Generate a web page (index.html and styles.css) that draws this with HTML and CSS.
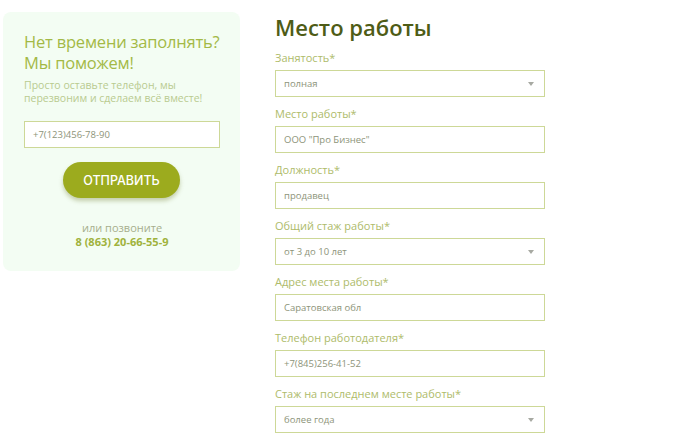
FILE: index.html
```html
<!DOCTYPE html>
<html lang="ru">
<head>
<meta charset="utf-8">
<link rel="stylesheet" href="styles.css">
</head>
<body>
<div class="page">
  <aside class="help">
    <h2 class="help-title">Нет времени заполнять?<br>Мы поможем!</h2>
    <p class="help-text">Просто оставьте телефон, мы перезвоним и сделаем всё вместе!</p>
    <div class="field help-field">+7(123)456-78-90</div>
    <button class="send">ОТПРАВИТЬ</button>
    <div class="call">или позвоните</div>
    <div class="phone">8 (863) 20-66-55-9</div>
  </aside>
  <main class="form">
    <h1 class="form-title">Место работы</h1>
    <div class="group">
      <div class="label">Занятость*</div>
      <div class="field select">полная<span class="arrow"></span></div>
    </div>
    <div class="group">
      <div class="label">Место работы*</div>
      <div class="field">ООО "Про Бизнес"</div>
    </div>
    <div class="group">
      <div class="label">Должность*</div>
      <div class="field">продавец</div>
    </div>
    <div class="group">
      <div class="label">Общий стаж работы*</div>
      <div class="field select">от 3 до 10 лет<span class="arrow"></span></div>
    </div>
    <div class="group">
      <div class="label">Адрес места работы*</div>
      <div class="field">Саратовская обл</div>
    </div>
    <div class="group">
      <div class="label">Телефон работодателя*</div>
      <div class="field">+7(845)256-41-52</div>
    </div>
    <div class="group">
      <div class="label">Стаж на последнем месте работы*</div>
      <div class="field select">более года<span class="arrow"></span></div>
    </div>
  </main>
</div>
</body>
</html>
```
FILE: styles.css
```css
* { box-sizing: border-box; }
html, body { margin: 0; padding: 0; background: #fff; }
body { font-family: "Open Sans", "Noto Sans", sans-serif; width: 700px; height: 441px; overflow: hidden; }
.page { display: flex; align-items: flex-start; padding-left: 3px; gap: 35px; }

.help {
  margin-top: 12px;
  width: 237px;
  height: 259px;
  background: #f3fdf3;
  border-radius: 8px;
  padding: 19px 20px 0 21px;
  display: flex;
  flex-direction: column;
}
.help-title {
  margin: 0;
  font-size: 16.5px;
  letter-spacing: -0.2px;
  line-height: 21px;
  font-weight: 400;
  color: #a3b946;
  white-space: nowrap;
}
.help-text {
  margin: 6px 0 0;
  font-size: 10.5px;
  line-height: 13px;
  color: #b9cb90;
}
.field {
  height: 27px;
  border: 1px solid #cdd897;
  background: #fff;
  font-size: 9.5px;
  line-height: 25px;
  padding: 0 8px;
  color: #8d9479;
  position: relative;
}
.help-field { margin-top: 16px; width: 196px; }
.send {
  align-self: center;
  margin-top: 14px;
  width: 117px;
  height: 36px;
  border: none;
  border-radius: 18px;
  background: #9cab1e;
  color: #fff;
  font-family: "Inter", "Open Sans", sans-serif;
  font-size: 12.5px;
  font-weight: 500;
  box-shadow: 0 3px 4px rgba(110, 120, 40, 0.35);
  margin-left: -1px;
}
.call {
  margin-top: 23px;
  text-align: center;
  font-size: 11px;
  line-height: 14px;
  color: #a6ae8c;
}
.phone {
  text-align: center;
  font-size: 11px;
  line-height: 14px;
  font-weight: 700;
  color: #a0b23c;
}

.form { width: 270px; padding-top: 9px; }
.form-title {
  margin: 0 0 5px;
  font-size: 22px;
  line-height: 36px;
  font-weight: 600;
  color: #4e5c16;
}
.group { margin-top: 9px; }
.group:first-of-type { margin-top: 0; }
.label {
  font-size: 11px;
  line-height: 16px;
  color: #aebb6a;
  margin-bottom: 4px;
}
.arrow {
  position: absolute;
  right: 10px;
  top: 11px;
  width: 0;
  height: 0;
  border-left: 3.5px solid transparent;
  border-right: 3.5px solid transparent;
  border-top: 4px solid #a7a9a2;
}
```
